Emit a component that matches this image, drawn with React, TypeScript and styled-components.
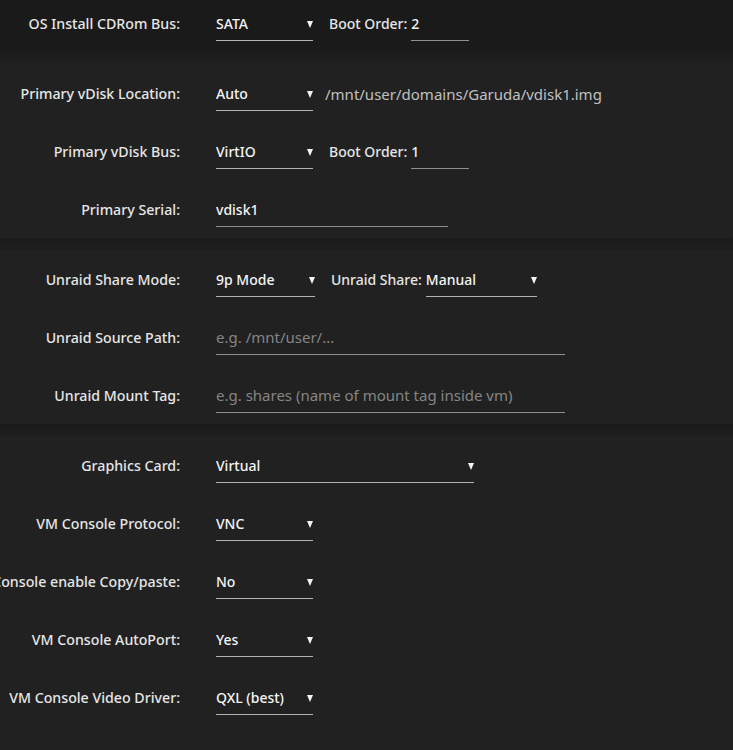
import React from "react";
import styled, { createGlobalStyle } from "styled-components";

const GlobalStyle = createGlobalStyle`
  html, body {
    margin: 0;
    padding: 0;
    background: #212121;
    overflow: hidden;
  }
  body {
    font-family: "Noto Sans", "Liberation Sans", sans-serif;
    font-size: 14px;
    color: #ececec;
  }
`;

const Page = styled.div`
  display: flex;
  flex-direction: column;
  width: 733px;
  height: 756px;
  overflow: hidden;
  margin-top: -6px; /* page is scrolled a little */
  background: #212121;
`;

const Section = styled.section<{ $dark?: boolean }>`
  display: flex;
  flex-direction: column;
  background: ${(p) => (p.$dark ? "#1a1a1a" : "#212121")};
`;

const Band = styled.div<{ $first?: boolean }>`
  height: 12px;
  flex: none;
  background: ${(p) =>
    p.$first
      ? "linear-gradient(#1c1c1c, #1f1f1f)"
      : "linear-gradient(#1b1b1b, #1e1e1e)"};
`;

const Row = styled.div`
  display: grid;
  grid-template-columns: 180px 1fr;
  column-gap: 36px;
  align-items: start;
  padding: 16px 0 11px;
`;

const Label = styled.div`
  display: flex;
  justify-content: flex-end;
  white-space: nowrap;
  line-height: 20px;
  padding-top: 4px;
  font-size: 14.2px;
  font-weight: 500;
  color: #e6e6e6;
`;

const Fields = styled.div`
  display: flex;
  align-items: flex-start;
  white-space: nowrap;
`;

const SelectBox = styled.div<{ $w: number }>`
  box-sizing: border-box;
  width: ${(p) => p.$w}px;
  display: flex;
  align-items: center;
  justify-content: space-between;
  line-height: 20px;
  padding: 4px 0 6px;
  border-bottom: 1px solid #b4b4b4;
  font-weight: 500;
  color: #f4f4f4;
`;

const Arrow = styled.span`
  width: 0;
  height: 0;
  border-left: 3.5px solid transparent;
  border-right: 3.5px solid transparent;
  border-top: 7px solid #f4f4f4;
`;

const TextInput = styled.input<{ $w: number }>`
  box-sizing: content-box;
  width: ${(p) => p.$w}px;
  height: 20px;
  line-height: 20px;
  padding: 4px 0 6px;
  margin: 0;
  border: none;
  border-bottom: 1px solid #8f8f8f;
  background: transparent;
  outline: none;
  font-family: inherit;
  font-size: 14px;
  font-weight: 500;
  color: #f4f4f4;
  &::placeholder {
    color: #858585;
    font-size: 15px;
    font-weight: 400;
  }
`;

const InlineLabel = styled.span`
  line-height: 20px;
  padding-top: 4px;
  margin: 0 4px 0 16px;
  font-weight: 500;
  color: #e6e6e6;
`;

const PathText = styled.span`
  line-height: 20px;
  padding-top: 4px;
  margin-left: 12px;
  font-size: 15px;
  color: #c0c0c0;
`;

const Select = ({ value, w }: { value: string; w: number }) => (
  <SelectBox $w={w}>
    <span>{value}</span>
    <Arrow />
  </SelectBox>
);

export default function App() {
  return (
    <>
      <GlobalStyle />
      <Page>
        <Section $dark>
          <Row>
            <Label>OS Install CDRom Bus:</Label>
            <Fields>
              <Select value="SATA" w={97} />
              <InlineLabel>Boot Order:</InlineLabel>
              <TextInput $w={58} defaultValue="2" />
            </Fields>
          </Row>
        </Section>
        <Band $first />
        <Section>
          <Row>
            <Label>Primary vDisk Location:</Label>
            <Fields>
              <Select value="Auto" w={97} />
              <PathText>/mnt/user/domains/Garuda/vdisk1.img</PathText>
            </Fields>
          </Row>
          <Row>
            <Label>Primary vDisk Bus:</Label>
            <Fields>
              <Select value="VirtIO" w={97} />
              <InlineLabel>Boot Order:</InlineLabel>
              <TextInput $w={58} defaultValue="1" />
            </Fields>
          </Row>
          <Row>
            <Label>Primary Serial:</Label>
            <Fields>
              <TextInput $w={232} defaultValue="vdisk1" />
            </Fields>
          </Row>
        </Section>
        <Band />
        <Section>
          <Row>
            <Label>Unraid Share Mode:</Label>
            <Fields>
              <Select value="9p Mode" w={99} />
              <InlineLabel>Unraid Share:</InlineLabel>
              <Select value="Manual" w={111} />
            </Fields>
          </Row>
          <Row>
            <Label>Unraid Source Path:</Label>
            <Fields>
              <TextInput $w={349} placeholder="e.g. /mnt/user/..." />
            </Fields>
          </Row>
          <Row>
            <Label>Unraid Mount Tag:</Label>
            <Fields>
              <TextInput
                $w={349}
                placeholder="e.g. shares (name of mount tag inside vm)"
              />
            </Fields>
          </Row>
        </Section>
        <Band />
        <Section>
          <Row>
            <Label>Graphics Card:</Label>
            <Fields>
              <Select value="Virtual" w={258} />
            </Fields>
          </Row>
          <Row>
            <Label>VM Console Protocol:</Label>
            <Fields>
              <Select value="VNC" w={97} />
            </Fields>
          </Row>
          <Row>
            <Label>VM Console enable Copy/paste:</Label>
            <Fields>
              <Select value="No" w={97} />
            </Fields>
          </Row>
          <Row>
            <Label>VM Console AutoPort:</Label>
            <Fields>
              <Select value="Yes" w={97} />
            </Fields>
          </Row>
          <Row>
            <Label>VM Console Video Driver:</Label>
            <Fields>
              <Select value="QXL (best)" w={97} />
            </Fields>
          </Row>
        </Section>
      </Page>
    </>
  );
}
